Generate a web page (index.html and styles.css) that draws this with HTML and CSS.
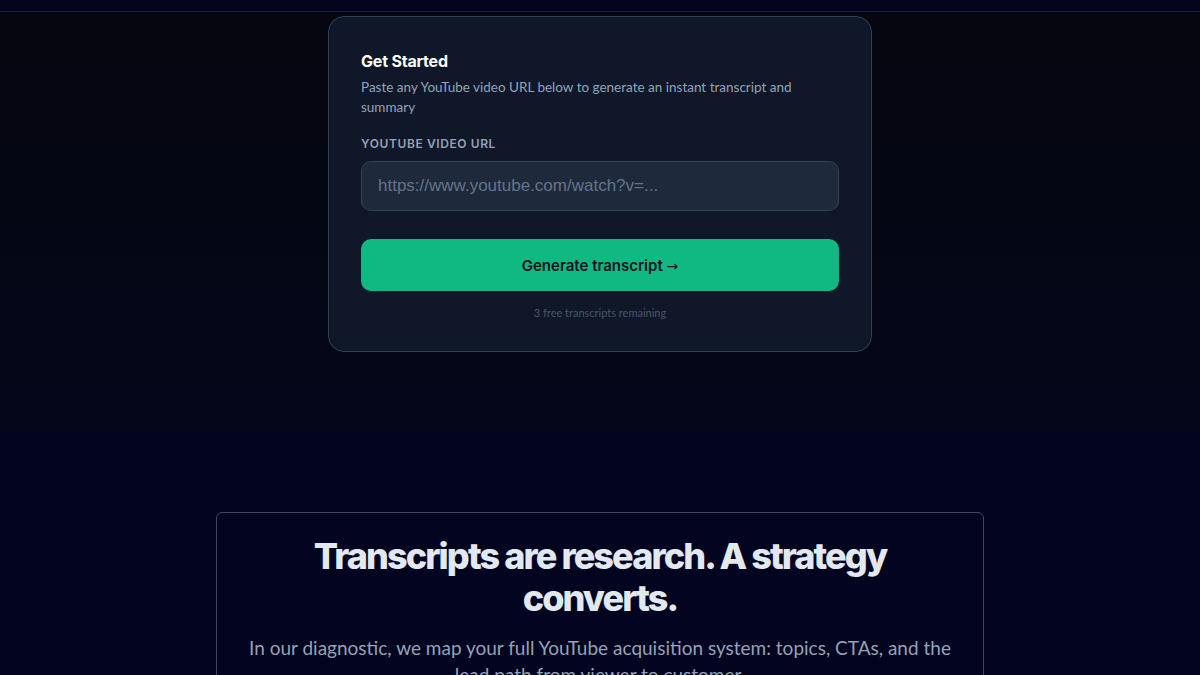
FILE: index.html
```html
<!DOCTYPE html>
<html lang="en">
<head>
    <meta charset="UTF-8">
    <meta name="viewport" content="width=device-width, initial-scale=1.0">
    <title>YouTube Transcript Generator</title>
    <link rel="stylesheet" href="styles.css">
</head>
<body>
    <!-- Top nav (scrolled mostly out of view) -->
    <header class="topbar"></header>

    <!-- Hero: transcript form -->
    <section class="hero">
        <div class="form-card">
            <h2 class="form-title">Get Started</h2>
            <p class="form-desc">Paste any YouTube video URL below to generate an instant transcript and summary</p>
            <label class="field-label" for="videoUrl">YouTube Video URL</label>
            <input class="url-input" id="videoUrl" type="text" placeholder="https://www.youtube.com/watch?v=...">
            <button class="btn-generate">Generate transcript <span class="arrow">→</span></button>
            <p class="remaining">3 free transcripts remaining</p>
        </div>
    </section>

    <!-- Strategy upsell -->
    <section class="strategy">
        <div class="strategy-card">
            <h2 class="strategy-title">Transcripts are research. A strategy converts.</h2>
            <p class="strategy-text">In our diagnostic, we map your full YouTube acquisition system: topics, CTAs, and the lead path from viewer to customer.</p>
        </div>
    </section>
</body>
</html>
```

FILE: styles.css
```css
* {
    box-sizing: border-box;
}

body {
    margin: 0;
    padding: 0;
    background: #05060f;
    font-family: 'Inter', 'Noto Sans', sans-serif;
    color: #e2e8f0;
    overflow: hidden;
}

/* Header */
.topbar {
    height: 12px;
    background: #03041c;
    border-bottom: 1px solid #1c1c44;
}

/* Hero */
.hero {
    height: 420px;
    display: flex;
    justify-content: center;
    align-items: flex-start;
    padding-top: 4px;
    background: linear-gradient(180deg, #05060f 0%, #05061a 100%);
}

.form-card {
    width: 544px;
    background: #0f1729;
    border: 1px solid #334155;
    border-radius: 16px;
    padding: 33px 32px 30px;
}

.form-title {
    margin: 0;
    font-size: 16px;
    font-weight: 700;
    color: #ffffff;
    letter-spacing: -0.2px;
    line-height: 22px;
}

.form-desc {
    margin: 5px 0 0;
    font-family: 'Lato', sans-serif;
    font-size: 13.5px;
    line-height: 20px;
    color: #94a3b8;
}

.field-label {
    display: block;
    margin-top: 19px;
    font-size: 12px;
    font-weight: 600;
    letter-spacing: 0.6px;
    text-transform: uppercase;
    color: #94a3b8;
    line-height: 16px;
}

.url-input {
    display: block;
    width: 100%;
    height: 50px;
    margin-top: 9px;
    padding: 0 16px;
    background: #1e293b;
    border: 1px solid #334155;
    border-radius: 10px;
    font-family: 'Liberation Sans', Arial, sans-serif;
    font-size: 17px;
    color: #e2e8f0;
    outline: none;
}

.url-input::placeholder {
    color: #64748b;
}

.btn-generate {
    display: block;
    width: 100%;
    height: 52px;
    margin-top: 28px;
    background: #10b981;
    border: none;
    border-radius: 10px;
    font-family: 'Inter', sans-serif;
    font-size: 15px;
    font-weight: 600;
    color: #0b1220;
    cursor: pointer;
}

.btn-generate .arrow {
    font-family: 'DejaVu Sans', sans-serif;
    font-size: 14px;
    font-weight: 400;
}

.remaining {
    margin: 14px 0 0;
    text-align: center;
    font-family: 'Lato', sans-serif;
    font-size: 11px;
    line-height: 16px;
    color: #4b5567;
}

/* Strategy section */
.strategy {
    display: flex;
    justify-content: center;
    padding-top: 80px;
    background: #03041f;
    height: 300px;
}

.strategy-card {
    width: 768px;
    border: 1px solid #3f4660;
    border-radius: 6px;
    padding: 22px 24px 24px;
    text-align: center;
    align-self: flex-start;
}

.strategy-title {
    margin: 0 auto;
    max-width: 600px;
    font-size: 36px;
    font-weight: 800;
    letter-spacing: -1.9px;
    line-height: 42px;
    color: #e2e8f0;
}

.strategy-text {
    margin: 15px 0 0;
    font-family: 'Lato', sans-serif;
    font-size: 19px;
    line-height: 27px;
    color: #94a3b8;
}
```
